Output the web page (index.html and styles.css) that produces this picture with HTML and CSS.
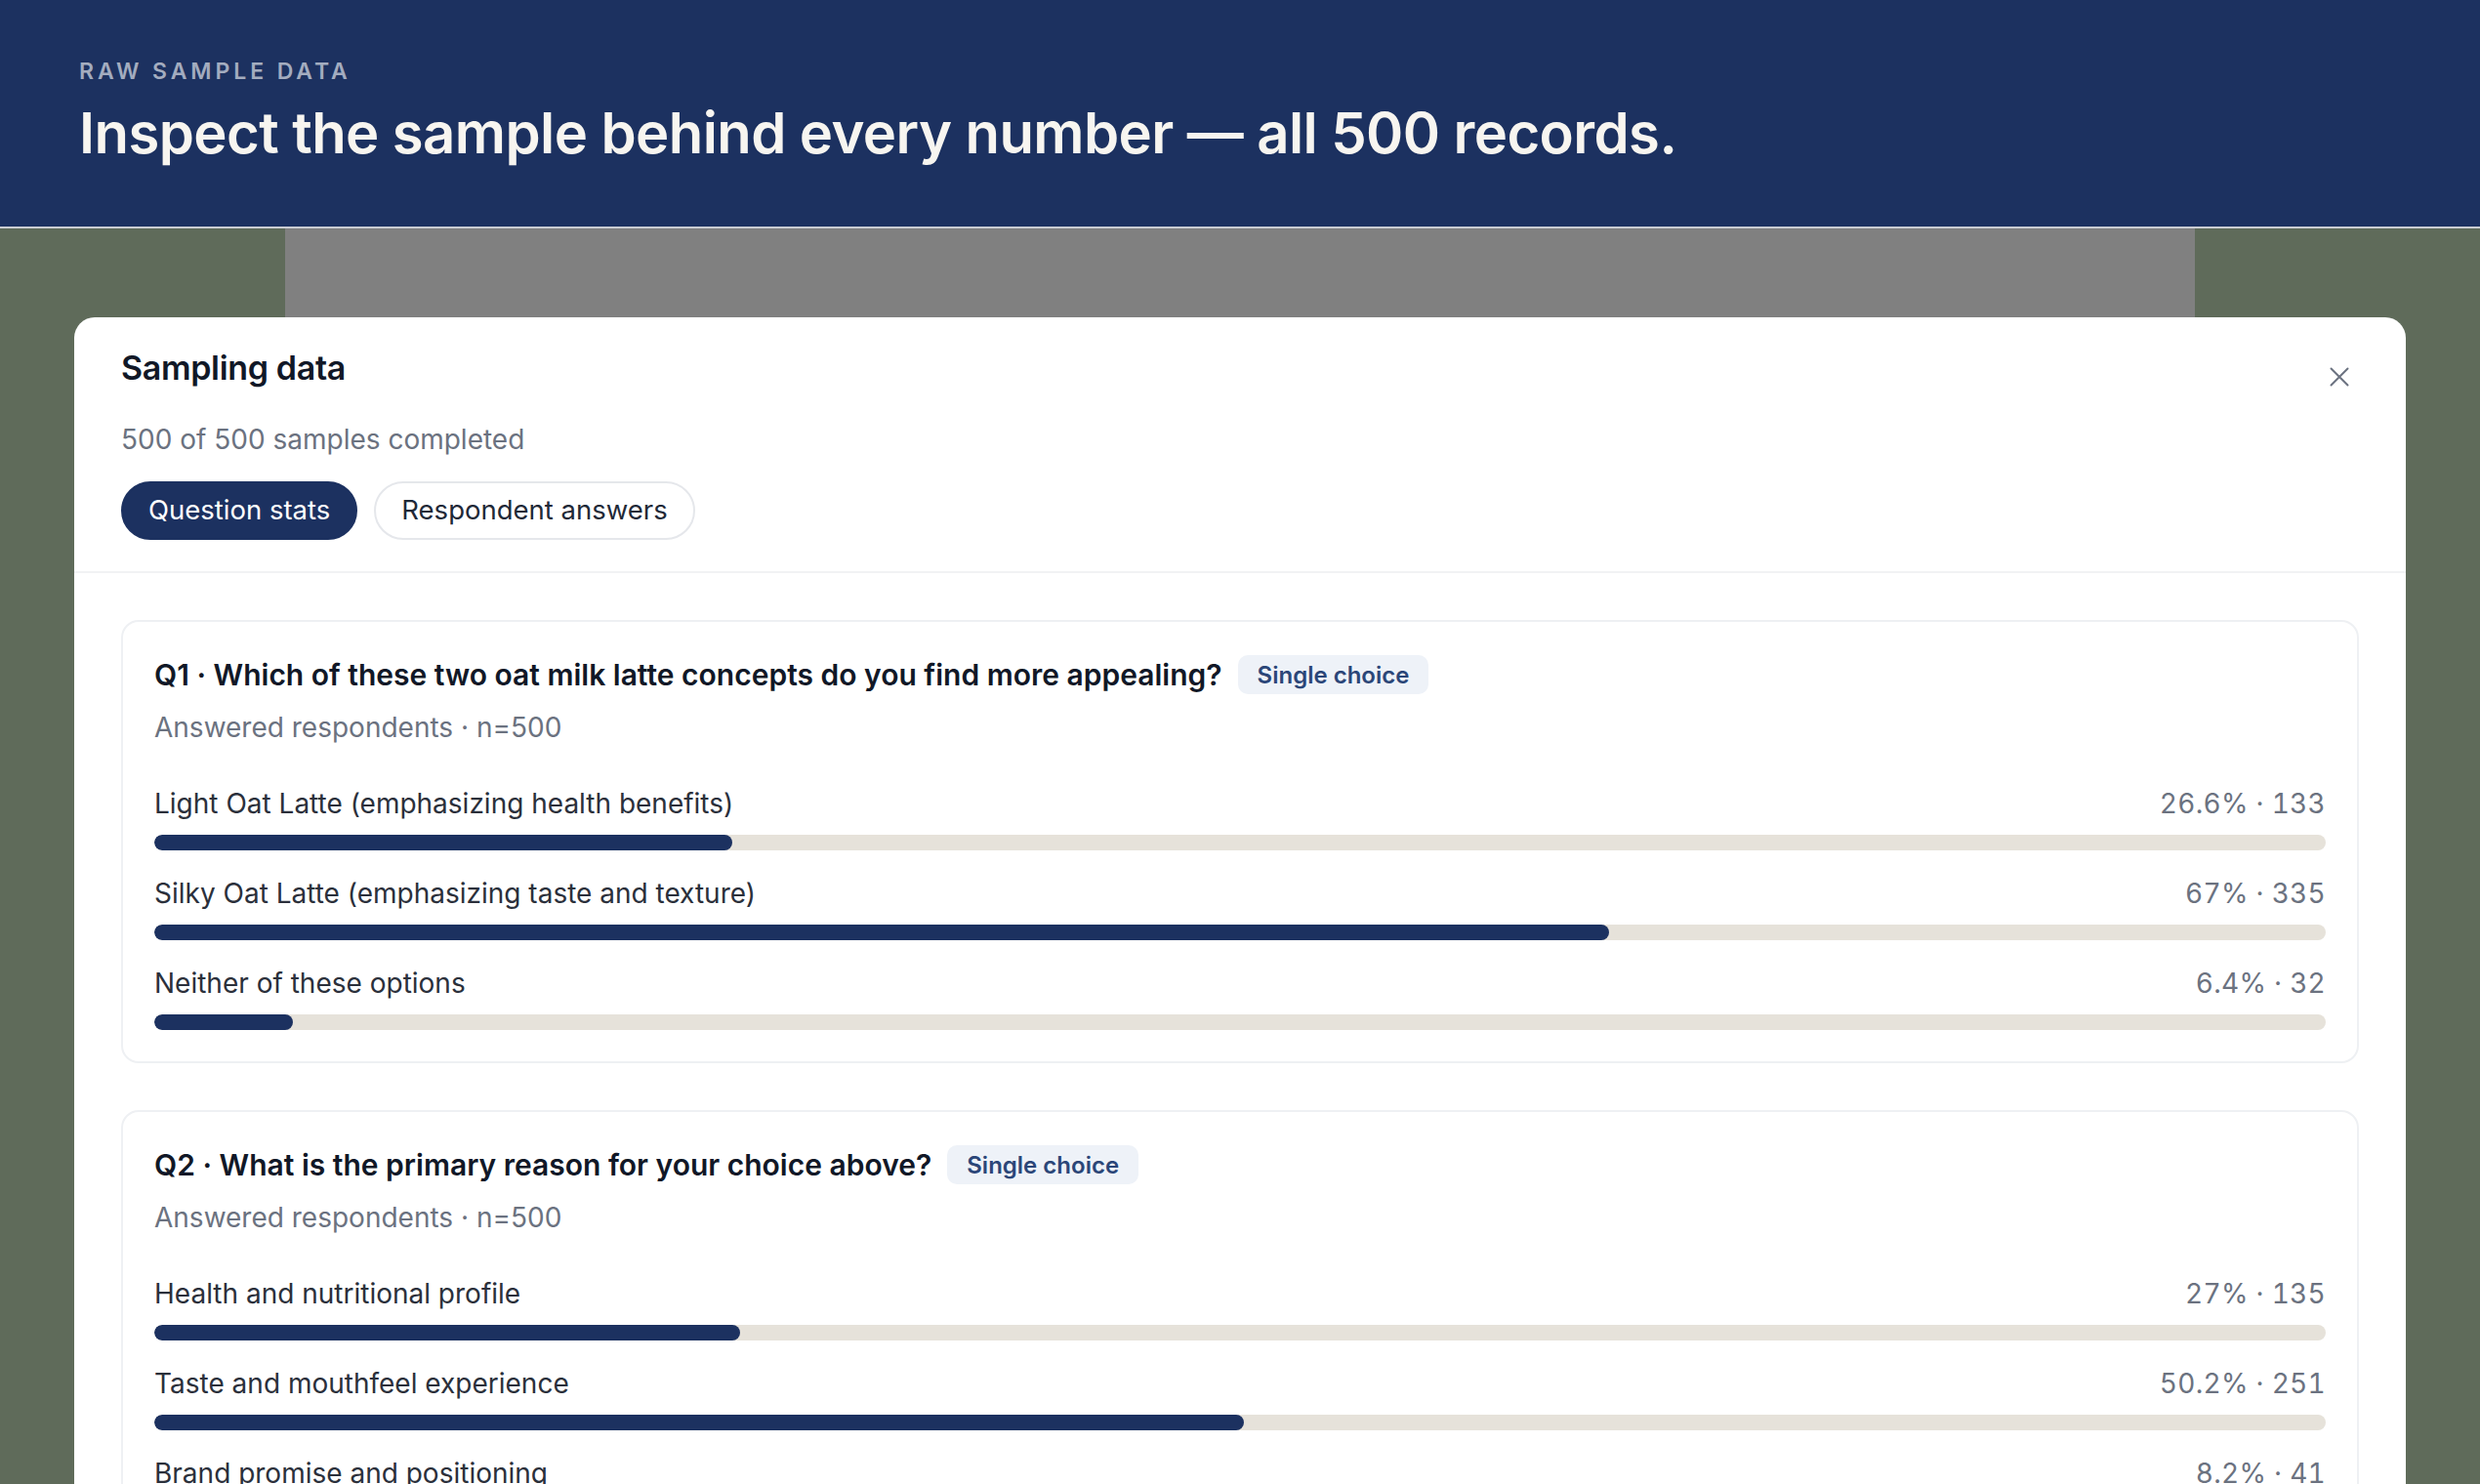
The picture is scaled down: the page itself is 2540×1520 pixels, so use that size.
FILE: index.html
```html
<!DOCTYPE html>
<html lang="en">
<head>
<meta charset="utf-8">
<title>Sampling data</title>
<link rel="stylesheet" href="styles.css">
</head>
<body>
<header class="hero">
  <p class="eyebrow">Raw sample data</p>
  <h1 class="hero-title">Inspect the sample behind every number — all 500 records.</h1>
</header>

<main class="stage">
  <div class="backdrop-panel"></div>

  <section class="modal" role="dialog" aria-labelledby="modal-title">
    <div class="modal-head">
      <div class="modal-head-main">
        <h2 class="modal-title" id="modal-title">Sampling data</h2>
        <p class="modal-sub">500 of 500 samples completed</p>
        <div class="tabs">
          <button class="tab tab-active">Question stats</button>
          <button class="tab">Respondent answers</button>
        </div>
      </div>
      <button class="close" aria-label="Close">
        <svg viewBox="0 0 24 24" width="24" height="24" fill="none" stroke="currentColor" stroke-width="2" stroke-linecap="round"><path d="M3.5 3.5L20.5 20.5M20.5 3.5L3.5 20.5"/></svg>
      </button>
    </div>

    <div class="modal-body">
      <article class="q-card">
        <div class="q-head">
          <h3 class="q-title">Q1 · Which of these two oat milk latte concepts do you find more appealing?</h3>
          <span class="badge">Single choice</span>
        </div>
        <p class="q-meta">Answered respondents · n=500</p>
        <ul class="options">
          <li class="option">
            <div class="option-line"><span class="option-label">Light Oat Latte (emphasizing health benefits)</span><span class="option-value">26.6% · 133</span></div>
            <div class="track"><div class="fill" style="width:26.6%"></div></div>
          </li>
          <li class="option">
            <div class="option-line"><span class="option-label">Silky Oat Latte (emphasizing taste and texture)</span><span class="option-value">67% · 335</span></div>
            <div class="track"><div class="fill" style="width:67%"></div></div>
          </li>
          <li class="option">
            <div class="option-line"><span class="option-label">Neither of these options</span><span class="option-value">6.4% · 32</span></div>
            <div class="track"><div class="fill" style="width:6.4%"></div></div>
          </li>
        </ul>
      </article>

      <article class="q-card">
        <div class="q-head">
          <h3 class="q-title">Q2 · What is the primary reason for your choice above?</h3>
          <span class="badge">Single choice</span>
        </div>
        <p class="q-meta">Answered respondents · n=500</p>
        <ul class="options">
          <li class="option">
            <div class="option-line"><span class="option-label">Health and nutritional profile</span><span class="option-value">27% · 135</span></div>
            <div class="track"><div class="fill" style="width:27%"></div></div>
          </li>
          <li class="option">
            <div class="option-line"><span class="option-label">Taste and mouthfeel experience</span><span class="option-value">50.2% · 251</span></div>
            <div class="track"><div class="fill" style="width:50.2%"></div></div>
          </li>
          <li class="option">
            <div class="option-line"><span class="option-label">Brand promise and positioning</span><span class="option-value">8.2% · 41</span></div>
            <div class="track"><div class="fill" style="width:8.2%"></div></div>
          </li>
          <li class="option">
            <div class="option-line"><span class="option-label">Price and value for money</span><span class="option-value">14.6% · 73</span></div>
            <div class="track"><div class="fill" style="width:14.6%"></div></div>
          </li>
        </ul>
      </article>
    </div>
  </section>
</main>
</body>
</html>
```

FILE: styles.css
```css
* { box-sizing: border-box; }

html, body {
  margin: 0;
  height: 100%;
}

body {
  font-family: Inter, "Noto Sans", "Liberation Sans", sans-serif;
  background: #5f6b5a;
  overflow: hidden;
  color: #111827;
}

/* Top banner */
.hero {
  background: #1c3160;
  height: 234px;
  padding: 60px 81px 0;
  border-bottom: 2px solid #c9ccd2;
}

.eyebrow {
  margin: 0;
  font-size: 23px;
  line-height: 27px;
  font-weight: 600;
  letter-spacing: 0.17em;
  text-transform: uppercase;
  color: #a3acbf;
}

.hero-title {
  margin: 14px 0 0;
  font-size: 58px;
  line-height: 70px;
  font-weight: 600;
  letter-spacing: -0.01em;
  color: #f7f5f0;
}

/* Dimmed page behind the dialog */
.stage {
  position: relative;
  height: calc(100% - 234px);
}

.backdrop-panel {
  width: 1956px;
  height: 100%;
  margin: 0 auto;
  background: #808080;
}

/* Dialog */
.modal {
  position: absolute;
  top: 91px;
  left: 76px;
  right: 76px;
  bottom: 0;
  background: #ffffff;
  border-radius: 21px 21px 0 0;
  overflow: hidden;
}

.modal-head {
  display: flex;
  justify-content: space-between;
  align-items: flex-start;
  padding: 31px 48px 32px;
  border-bottom: 2px solid #f1f2f4;
}

.modal-title {
  margin: 0;
  font-size: 34px;
  line-height: 41px;
  font-weight: 600;
  letter-spacing: -0.01em;
  color: #111827;
}

.modal-sub {
  margin: 33px 0 0;
  font-size: 28px;
  line-height: 40px;
  color: #6b7280;
}

.tabs {
  display: flex;
  gap: 17px;
  margin-top: 23px;
}

.tab {
  font-family: inherit;
  font-size: 27.5px;
  line-height: 1;
  height: 60px;
  padding: 0 26px;
  border-radius: 30px;
  border: 2px solid #e5e7eb;
  background: #ffffff;
  color: #1f2937;
}

.tab-active {
  background: #1c3160;
  border-color: #1c3160;
  color: #ffffff;
}

.close {
  width: 40px;
  height: 40px;
  margin-top: 10px;
  padding: 0;
  border: 0;
  background: transparent;
  color: #6b7280;
  display: flex;
  align-items: center;
  justify-content: center;
}

.modal-body {
  display: flex;
  flex-direction: column;
  gap: 48px;
  padding: 48px;
}

/* Question cards */
.q-card {
  border: 2px solid #eef0f3;
  border-radius: 18px;
  padding: 34px 32px 32px;
}

.q-head {
  display: flex;
  align-items: center;
  gap: 16px;
  height: 40px;
}

.q-title {
  margin: 0;
  font-size: 30px;
  line-height: 40px;
  font-weight: 600;
  color: #111827;
}

.badge {
  height: 40px;
  padding: 0 20px;
  display: flex;
  align-items: center;
  border-radius: 10px;
  background: #eef2f8;
  color: #2b4678;
  font-size: 24px;
  font-weight: 600;
}

.q-meta {
  margin: 14px 0 0;
  font-size: 28px;
  line-height: 40px;
  color: #6b7280;
}

.options {
  list-style: none;
  margin: 38px 0 0;
  padding: 0;
  display: flex;
  flex-direction: column;
  gap: 24px;
}

.option-line {
  display: flex;
  justify-content: space-between;
  align-items: center;
  font-size: 28px;
  line-height: 40px;
}

.option-label { color: #2b303b; }

.option-value {
  color: #6b7280;
  letter-spacing: 0.01em;
  font-variant-numeric: tabular-nums;
}

.track {
  margin-top: 12px;
  height: 16px;
  border-radius: 8px;
  background: #e6e2da;
  overflow: hidden;
}

.fill {
  height: 100%;
  border-radius: 8px;
  background: #1c3160;
}
```
